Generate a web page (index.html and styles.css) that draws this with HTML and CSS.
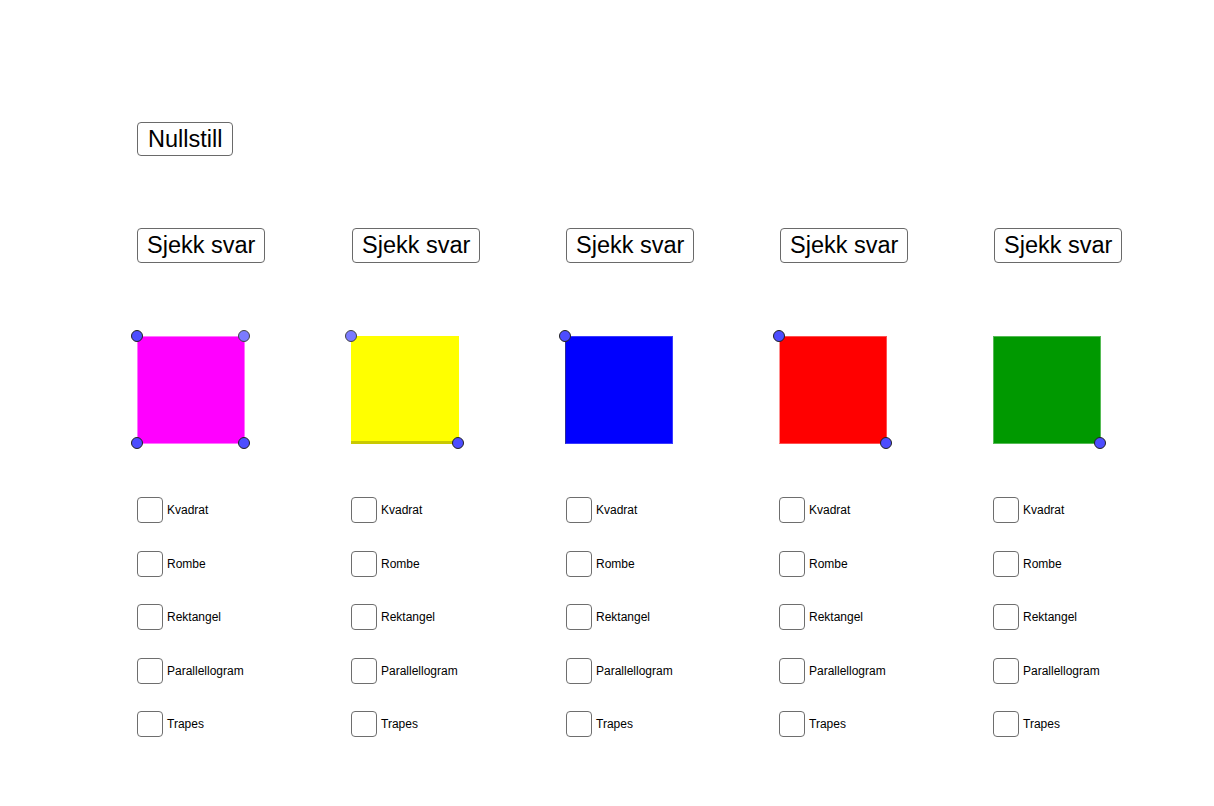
FILE: index.html
```html
<!DOCTYPE html>
<html lang="no">
<head>
    <meta charset="UTF-8">
    <title>Firkanter</title>
    <link rel="stylesheet" href="styles.css">
</head>
<body>
    <div class="page">
        <button class="btn reset">Nullstill</button>

        <div class="columns">
            <!-- magenta -->
            <div class="column">
                <button class="btn check first">Sjekk svar</button>
                <div class="shape magenta">
                    <span class="point tl"></span>
                    <span class="point tr light"></span>
                    <span class="point bl"></span>
                    <span class="point br"></span>
                </div>
                <div class="options">
                    <label class="option"><span class="box"></span>Kvadrat</label>
                    <label class="option"><span class="box"></span>Rombe</label>
                    <label class="option"><span class="box"></span>Rektangel</label>
                    <label class="option"><span class="box"></span>Parallellogram</label>
                    <label class="option"><span class="box"></span>Trapes</label>
                </div>
            </div>

            <!-- gul -->
            <div class="column">
                <button class="btn check">Sjekk svar</button>
                <div class="shape yellow">
                    <span class="point tl light"></span>
                    <span class="point br"></span>
                </div>
                <div class="options">
                    <label class="option"><span class="box"></span>Kvadrat</label>
                    <label class="option"><span class="box"></span>Rombe</label>
                    <label class="option"><span class="box"></span>Rektangel</label>
                    <label class="option"><span class="box"></span>Parallellogram</label>
                    <label class="option"><span class="box"></span>Trapes</label>
                </div>
            </div>

            <!-- blå -->
            <div class="column">
                <button class="btn check">Sjekk svar</button>
                <div class="shape blue">
                    <span class="point tl"></span>
                </div>
                <div class="options shifted">
                    <label class="option"><span class="box"></span>Kvadrat</label>
                    <label class="option"><span class="box"></span>Rombe</label>
                    <label class="option"><span class="box"></span>Rektangel</label>
                    <label class="option"><span class="box"></span>Parallellogram</label>
                    <label class="option"><span class="box"></span>Trapes</label>
                </div>
            </div>

            <!-- rød -->
            <div class="column">
                <button class="btn check">Sjekk svar</button>
                <div class="shape red">
                    <span class="point tl"></span>
                    <span class="point br"></span>
                </div>
                <div class="options">
                    <label class="option"><span class="box"></span>Kvadrat</label>
                    <label class="option"><span class="box"></span>Rombe</label>
                    <label class="option"><span class="box"></span>Rektangel</label>
                    <label class="option"><span class="box"></span>Parallellogram</label>
                    <label class="option"><span class="box"></span>Trapes</label>
                </div>
            </div>

            <!-- grønn -->
            <div class="column">
                <button class="btn check">Sjekk svar</button>
                <div class="shape green">
                    <span class="point br"></span>
                </div>
                <div class="options">
                    <label class="option"><span class="box"></span>Kvadrat</label>
                    <label class="option"><span class="box"></span>Rombe</label>
                    <label class="option"><span class="box"></span>Rektangel</label>
                    <label class="option"><span class="box"></span>Parallellogram</label>
                    <label class="option"><span class="box"></span>Trapes</label>
                </div>
            </div>
        </div>
    </div>
</body>
</html>
```

FILE: styles.css
```css
body {
    margin: 0;
    background: #fff;
    font-family: "Liberation Sans", Arial, sans-serif;
    color: #000;
}
.page {
    padding: 122px 0 0 137px;
}
.btn {
    display: block;
    background: #fff;
    color: #000;
    font-family: "Liberation Sans", Arial, sans-serif;
    font-size: 23.5px;
    line-height: 32px;
    padding: 0 9px;
    border: 1px solid #6a6a6a;
    border-radius: 4px;
    cursor: pointer;
}
.reset {
    padding: 0 10px;
    margin-bottom: 72px;
}
.columns {
    display: grid;
    grid-template-columns: repeat(5, 214px);
}
.column {
    display: flex;
    flex-direction: column;
    align-items: flex-start;
}
.check {
    line-height: 33px;
    margin-left: 1px;
    margin-bottom: 73px;
}
.check.first {
    margin-left: 0;
}
.shape {
    position: relative;
    width: 108px;
    height: 108px;
    box-sizing: border-box;
    margin-bottom: 53px;
}
.magenta {
    background: #ff00ff;
    border: 1px solid #ff70ff;
}
.yellow {
    background: #ffff00;
    border-bottom: 3px solid #c9c900;
}
.blue {
    background: #0000ff;
    border: 1px solid #3a3aff;
    border-left-color: #2a2a9a;
}
.red {
    background: #ff0000;
    border: 1px solid #ff5050;
    border-left-color: #ff9090;
}
.green {
    background: #009900;
    border: 1px solid #55bb55;
}
.point {
    position: absolute;
    width: 10px;
    height: 10px;
    border-radius: 50%;
    background: #4d4dff;
    border: 1px solid #222;
    margin: -7px 0 0 -7px;
}
.point.light {
    background: #7b7bff;
    border-color: #444;
}
.tl { left: 0; top: 0; }
.tr { left: 107px; top: 0; }
.bl { left: 0; top: 107px; }
.br { left: 107px; top: 107px; }
.yellow .point { margin: -6px 0 0 -6px; }
.yellow .br { left: 107px; top: 107px; }
.options {
    display: flex;
    flex-direction: column;
    gap: 27.5px;
}
.options.shifted {
    margin-left: 1px;
}
.option {
    display: flex;
    align-items: center;
    gap: 4px;
    height: 26px;
    font-size: 12px;
    cursor: pointer;
}
.box {
    width: 26px;
    height: 26px;
    box-sizing: border-box;
    border: 1px solid #6e6e6e;
    border-radius: 4px;
    background: #fff;
}
```
